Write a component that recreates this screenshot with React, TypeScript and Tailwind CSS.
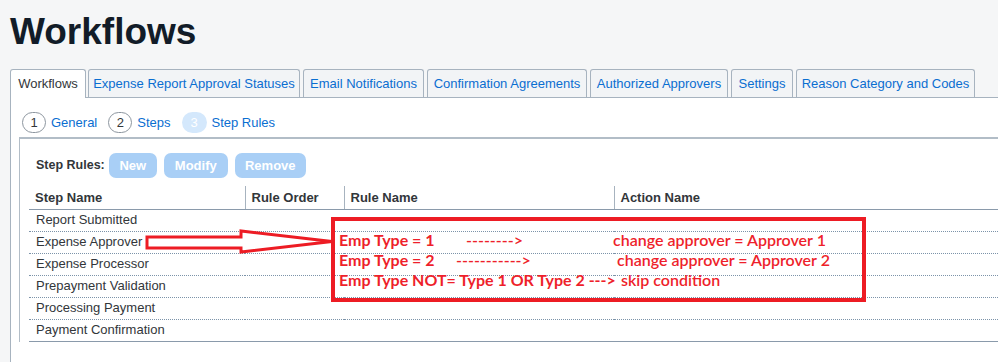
import React from 'react';

const tabs = [
  { label: 'Workflows', w: 'w-[76px]', ml: 'ml-0', active: true },
  { label: 'Expense Report Approval Statuses', w: 'w-[212px]', ml: 'ml-[2px]' },
  { label: 'Email Notifications', w: 'w-[121px]', ml: 'ml-[3px]' },
  { label: 'Confirmation Agreements', w: 'w-[160px]', ml: 'ml-[3px]' },
  { label: 'Authorized Approvers', w: 'w-[138px]', ml: 'ml-[3px]' },
  { label: 'Settings', w: 'w-[62px]', ml: 'ml-[3px]' },
  { label: 'Reason Category and Codes', w: 'w-[179px]', ml: 'ml-[3px]' },
];

const rows = [
  'Report Submitted',
  'Expense Approver',
  'Expense Processor',
  'Prepayment Validation',
  'Processing Payment',
  'Payment Confirmation',
];

function StepBadge({ n, label, current }: { n: number; label: string; current?: boolean }) {
  return (
    <div className="flex items-center gap-[5px]">
      <span
        className={
          current
            ? 'flex h-[21px] w-[25px] items-center justify-center rounded-full bg-[#d4e8fc] text-white'
            : 'flex h-[21px] w-[24px] items-center justify-center rounded-full border border-[#8d969f] text-[#32363a]'
        }
      >
        {n}
      </span>
      <span className="text-[#0a6ed1]">{label}</span>
    </div>
  );
}

export default function App() {
  const btnCls =
    'flex h-[25px] items-center justify-center rounded-[7px] bg-[#a9cff6] text-[13px] font-bold text-white';
  const thCls = 'h-[23px] border-b border-[#8a9aab] px-[6px] text-left align-middle font-bold text-[#32363a]';

  return (
    <div
      className="relative h-[362px] w-full overflow-hidden bg-[#f5f6f7] text-[13px] text-[#32363a]"
      style={{ fontFamily: '"Liberation Sans", Arial, sans-serif' }}
    >
      <h1 className="pl-[10px] pt-[10px] text-[37px] font-black leading-[44px] text-[#121c28]">Workflows</h1>

      {/* tab strip */}
      <div className="mt-[15px] flex items-end pl-[10px]">
        {tabs.map((t) => (
          <div
            key={t.label}
            className={`${t.w} ${t.ml} flex shrink-0 items-center justify-center rounded-t-[3px] border border-b-0 border-[#a7b3bf] whitespace-nowrap ${
              t.active
                ? 'relative z-10 -mb-px h-[29px] bg-white text-[#32363a]'
                : 'h-[28px] bg-[#f2f4f6] text-[#0a6ed1]'
            }`}
          >
            {t.label}
          </div>
        ))}
      </div>

      {/* panel */}
      <div className="ml-[10px] border-l border-t border-[#a7b3bf] bg-white pb-[40px] pl-[8px]">
        <div className="flex items-center gap-[11px] pl-[3px] pt-[14px]">
          <StepBadge n={1} label="General" />
          <StepBadge n={2} label="Steps" />
          <StepBadge n={3} label="Step Rules" current />
        </div>

        <div className="mt-[4px] border-l border-t-2 border-[#b2bdc7] pl-[9px] pt-[14px]">
          <div className="flex items-center gap-[7px] pl-[7px]">
            <span className="mr-[-3px] text-[12.5px] font-bold text-[#32363a]">Step Rules:</span>
            <span className={`${btnCls} w-[48px]`}>New</span>
            <span className={`${btnCls} w-[64px]`}>Modify</span>
            <span className={`${btnCls} w-[71px]`}>Remove</span>
          </div>

          <table className="mt-[8px] w-full border-collapse">
            <thead>
              <tr>
                <th className={`${thCls} w-[216px]`}>Step Name</th>
                <th className={`${thCls} w-[99px] border-l border-l-[#a7b3bf]`}>Rule Order</th>
                <th className={`${thCls} w-[270px] border-l border-l-[#a7b3bf]`}>Rule Name</th>
                <th className={`${thCls} border-l border-l-[#a7b3bf]`}>Action Name</th>
              </tr>
            </thead>
            <tbody>
              {rows.map((r, i) => (
                <tr
                  key={r}
                  className={
                    i === rows.length - 1
                      ? 'h-[22px] border-b border-solid border-[#8a9aab]'
                      : 'h-[22px] border-b border-dotted border-[#7c93a9]'
                  }
                >
                  <td className="px-[7px] align-middle">{r}</td>
                  <td />
                  <td />
                  <td />
                </tr>
              ))}
            </tbody>
          </table>
        </div>
      </div>

      {/* red annotation: arrow */}
      <svg className="absolute left-[140px] top-[226px]" width="196" height="30" viewBox="0 0 196 30">
        <polygon
          points="7,11 101,11 101,5 192,15.5 101,26 101,22 7,22"
          fill="white"
          stroke="#ed1c24"
          strokeWidth="3"
          strokeLinejoin="miter"
        />
      </svg>

      {/* red annotation: box */}
      <div
        className="absolute left-[331px] top-[217px] h-[85px] w-[535px] border-4 border-[#ed1c24] pl-[4px] pt-[9px] text-[16px] font-bold leading-[20px] text-[#ee1f2b]"
        style={{ fontFamily: 'Lato, "Open Sans", sans-serif' }}
      >
        <div className="flex whitespace-nowrap">
          <span className="w-[127px] shrink-0">Emp Type = 1</span>
          <span className="w-[147px] shrink-0 font-semibold">--------&gt;</span>
          <span className="font-semibold">change approver = Approver 1</span>
        </div>
        <div className="flex whitespace-nowrap">
          <span className="w-[117px] shrink-0">Emp Type = 2</span>
          <span className="w-[161px] shrink-0 font-semibold">-----------&gt;</span>
          <span className="font-semibold">change approver = Approver 2</span>
        </div>
        <div className="flex whitespace-nowrap">
          <span className="w-[282px] shrink-0">Emp Type NOT= Type 1 OR Type 2 ---&gt;</span>
          <span className="font-semibold">skip condition</span>
        </div>
      </div>
    </div>
  );
}
